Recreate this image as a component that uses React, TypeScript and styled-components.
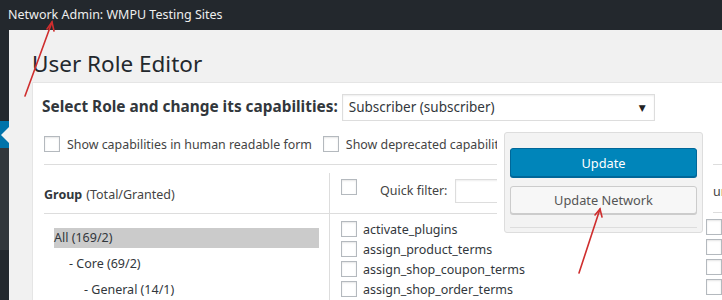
import React from 'react';
import styled, {createGlobalStyle} from 'styled-components';

const font = `"Noto Sans", "DejaVu Sans", sans-serif`;

const GlobalStyle = createGlobalStyle`
    html, body {
        margin: 0;
        padding: 0;
        background: #f1f1f1;
    }
    body {
        font-family: ${font};
        font-size: 12.5px;
        color: #444;
    }
    * {
        box-sizing: border-box;
    }
`;

const groups = [
    {label: 'All (169/2)', level: 0, active: true},
    {label: '- Core (69/2)', level: 1, active: false},
    {label: '- General (14/1)', level: 2, active: false},
];

const caps = ['activate_plugins', 'assign_product_terms', 'assign_shop_coupon_terms', 'assign_shop_order_terms'];

export default function App() {
    return (
        <Page>
            <GlobalStyle/>
            <AdminBar>Network Admin: WMPU Testing Sites</AdminBar>
            <Main>
                <Sidebar>
                    <MenuBlock $tone={'dark'} $height={91}/>
                    <CurrentItem/>
                    <MenuBlock $tone={'sub'} $height={102}/>
                    <MenuBlock $tone={'dark'} $height={60}/>
                </Sidebar>

                <Content>
                    <Title>User Role Editor</Title>
                    <Panel>
                        <RoleRow>
                            <RoleLabel>Select Role and change its capabilities:</RoleLabel>
                            <Select>
                                Subscriber (subscriber)
                                <SelectArrow>▼</SelectArrow>
                            </Select>
                        </RoleRow>

                        <OptionsRow>
                            <CheckLabel><Box/>Show capabilities in human readable form</CheckLabel>
                            <CheckLabel><Box/>Show deprecated capabilities</CheckLabel>
                        </OptionsRow>

                        <Editor>
                            <MainTable>
                                <GroupHead><b>Group</b> (Total/Granted)</GroupHead>
                                <CapsHead>
                                    <Box/>
                                    <FilterLabel>Quick filter:</FilterLabel>
                                    <FilterInput/>
                                </CapsHead>
                                <GroupList>
                                    {groups.map(g => (
                                        <GroupItem key={g.label} $level={g.level} $active={g.active}>{g.label}</GroupItem>
                                    ))}
                                </GroupList>
                                <CapsList>
                                    {caps.map(c => (
                                        <CapRow key={c}><Box/>{c}</CapRow>
                                    ))}
                                </CapsList>
                            </MainTable>

                            <SideColumn>
                                <SideHead>ur</SideHead>
                                <SideList>
                                    {caps.map(c => <SideRow key={c}><Box/></SideRow>)}
                                </SideList>
                            </SideColumn>
                        </Editor>

                        <UpdateDock>
                            <UpdateBox>
                                <Button $primary>Update</Button>
                                <Button>Update Network</Button>
                                <DockRule/>
                            </UpdateBox>
                        </UpdateDock>
                    </Panel>
                </Content>
            </Main>

            <Annotations viewBox="0 0 722 300">
                <g stroke="#cf2e2e" strokeWidth="1.6" fill="none" strokeLinecap="round">
                    <line x1="25" y1="96" x2="52" y2="22"/>
                    <polyline points="47,29 52,22 54,31"/>
                    <line x1="579" y1="273" x2="600" y2="209"/>
                    <polyline points="595,215 600,209 602,217"/>
                </g>
            </Annotations>
        </Page>
    );
}

const Page = styled.div`
    position: relative;
    width: 722px;
    height: 300px;
    overflow: hidden;
    display: flex;
    flex-direction: column;
`;

const AdminBar = styled.div`
    height: 30px;
    flex-shrink: 0;
    background: #23282d;
    color: #eee;
    font-size: 12.5px;
    line-height: 30px;
    padding-left: 8px;
    white-space: nowrap;
`;

const Main = styled.div`
    flex: 1;
    display: flex;
    min-height: 0;
`;

const Sidebar = styled.div`
    width: 9px;
    flex-shrink: 0;
    display: flex;
    flex-direction: column;
`;

const MenuBlock = styled.div<{ $tone: 'dark' | 'sub'; $height: number }>`
    height: ${p => p.$height}px;
    flex-shrink: 0;
    background: ${p => p.$tone === 'sub' ? '#32373c' : '#23282d'};
`;

const CurrentItem = styled.div`
    position: relative;
    height: 27px;
    flex-shrink: 0;
    background: #0073aa;

    &::after {
        content: '';
        position: absolute;
        right: 0;
        top: 6px;
        border: 8px solid transparent;
        border-right-color: #f1f1f1;
        border-left-width: 0;
    }
`;

const Content = styled.div`
    flex: 1;
    min-width: 0;
    padding-left: 23px;
    background: #f1f1f1;
`;

const Title = styled.h1`
    margin: 0 0 4px;
    padding-top: 19px;
    height: 48px;
    font-size: 22.5px;
    line-height: 29px;
    font-weight: 400;
    color: #23282d;
    white-space: nowrap;
`;

const Panel = styled.div`
    position: relative;
    height: 300px;
    background: #fff;
    border-top: 1px solid #e5e5e5;
    border-left: 1px solid #e5e5e5;
    padding: 11px 0 0 11px;
`;

const RoleRow = styled.div`
    display: flex;
    align-items: center;
    margin-left: -2px;
    height: 27px;
`;

const RoleLabel = styled.div`
    font-size: 15.4px;
    font-weight: 700;
    color: #32373c;
    white-space: nowrap;
    margin-right: 4px;
    margin-top: -3px;
`;

const Select = styled.div`
    position: relative;
    width: 313px;
    height: 27px;
    border: 1px solid #ddd;
    box-shadow: inset 0 1px 2px rgba(0, 0, 0, .07);
    padding-left: 6px;
    font-size: 13.5px;
    line-height: 25px;
    color: #32373c;
    white-space: nowrap;
`;

const SelectArrow = styled.span`
    position: absolute;
    right: 8px;
    top: 0;
    font-size: 9px;
    color: #222;
`;

const OptionsRow = styled.div`
    display: flex;
    align-items: center;
    gap: 11px;
    margin-top: 15px;
    height: 16px;
`;

const Box = styled.span`
    display: inline-block;
    flex-shrink: 0;
    width: 16px;
    height: 16px;
    border: 1px solid #b4b9be;
    background: #fff;
    box-shadow: inset 0 1px 2px rgba(0, 0, 0, .1);
`;

const CheckLabel = styled.label`
    display: flex;
    align-items: center;
    gap: 7px;
    font-size: 12.4px;
    color: #444;
    white-space: nowrap;
`;

const Editor = styled.div`
    display: flex;
    gap: 3px;
    margin-top: 12px;
`;

const MainTable = styled.div`
    width: 659px;
    flex-shrink: 0;
    border-top: 1px solid #ddd;
    padding-top: 8px;
    display: grid;
    grid-template-columns: 286px 1fr;
    grid-template-rows: 41px auto;
`;

const GroupHead = styled.div`
    display: flex;
    align-items: center;
    padding-top: 2px;
    border-right: 1px solid #ddd;
    border-bottom: 1px solid #ddd;
    font-size: 12.5px;
    color: #444;
    white-space: nowrap;

    b {
        margin-right: 4px;
        color: #32373c;
    }
`;

const CapsHead = styled.div`
    display: flex;
    align-items: flex-start;
    padding: 6px 0 0 11px;
    border-bottom: 1px solid #ddd;
`;

const FilterLabel = styled.span`
    margin: 3px 8px 0 23px;
    font-size: 12.5px;
    color: #444;
    white-space: nowrap;
`;

const FilterInput = styled.div`
    flex: 1;
    height: 24px;
    border: 1px solid #ddd;
    box-shadow: inset 0 1px 2px rgba(0, 0, 0, .07);
`;

const GroupList = styled.div`
    border-right: 1px solid #ddd;
    padding: 14px 10px 0;
    display: flex;
    flex-direction: column;
    gap: 6px;
`;

const GroupItem = styled.div<{ $level: number; $active: boolean }>`
    height: 20px;
    line-height: 20px;
    padding-left: ${p => p.$level * 15}px;
    background: ${p => p.$active ? '#cbcbcb' : 'transparent'};
    font-size: 12.5px;
    color: #32373c;
    white-space: nowrap;
`;

const CapsList = styled.div`
    padding: 5px 0 0 11px;
`;

const CapRow = styled.div`
    display: flex;
    align-items: center;
    gap: 6px;
    height: 20px;
    font-size: 12.5px;
    color: #32373c;
    white-space: nowrap;
`;

const SideColumn = styled.div`
    position: relative;
    z-index: 2;
    flex: 1;
    min-width: 0;
`;

const SideHead = styled.div`
    margin-left: 7px;
    height: 49px;
    border-top: 1px solid #ddd;
    border-bottom: 1px solid #ddd;
    padding-top: 18px;
    font-size: 12.5px;
    color: #444;
    white-space: nowrap;
`;

const SideList = styled.div`
    padding-top: 6px;
`;

const SideRow = styled.div`
    height: 20px;
`;

const UpdateDock = styled.div`
    position: absolute;
    z-index: 1;
    left: 464px;
    top: 42px;
    padding: 7px 10px 0 7px;
    background: #fff;
`;

const UpdateBox = styled.div`
    width: 199px;
    height: 101px;
    background: #f3f3f3;
    border: 1px solid #ddd;
    border-radius: 3px;
    padding: 15px 5px 0;
    display: flex;
    flex-direction: column;
`;

const Button = styled.div<{ $primary?: boolean }>`
    height: ${p => p.$primary ? 29 : 28}px;
    margin-bottom: ${p => p.$primary ? 9 : 13}px;
    border: 1px solid ${p => p.$primary ? '#006799' : '#ccc'};
    border-radius: 3px;
    background: ${p => p.$primary ? '#0085ba' : '#f7f7f7'};
    box-shadow: ${p => p.$primary ? '0 1px 0 #006799' : '0 1px 0 #ccc'};
    color: ${p => p.$primary ? '#fff' : '#555'};
    font-size: 12.8px;
    display: flex;
    align-items: center;
    justify-content: center;
    white-space: nowrap;
`;

const DockRule = styled.div`
    height: 1px;
    background: #ddd;
`;

const Annotations = styled.svg`
    position: absolute;
    left: 0;
    top: 0;
    width: 722px;
    height: 300px;
    pointer-events: none;
    z-index: 5;
`;
